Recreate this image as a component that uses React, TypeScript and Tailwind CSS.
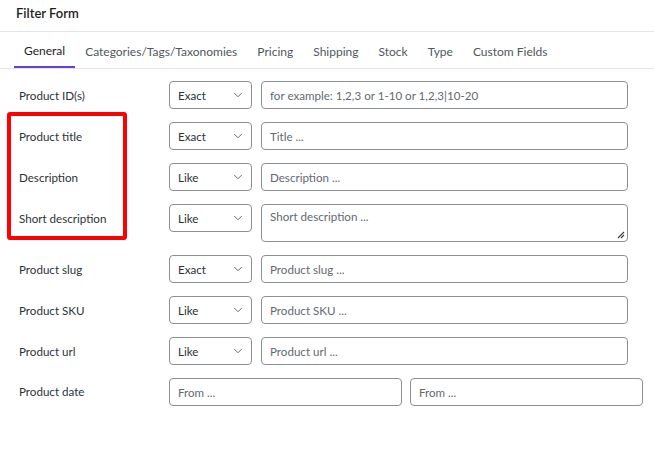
import { ChevronDown } from "lucide-react";

const tabs = ["General", "Categories/Tags/Taxonomies", "Pricing", "Shipping", "Stock", "Type", "Custom Fields"];

type Row = { label: string; mode: string; placeholder: string; area?: boolean };

const rows: Row[] = [
  { label: "Product ID(s)", mode: "Exact", placeholder: "for example: 1,2,3 or 1-10 or 1,2,3|10-20" },
  { label: "Product title", mode: "Exact", placeholder: "Title ..." },
  { label: "Description", mode: "Like", placeholder: "Description ..." },
  { label: "Short description", mode: "Like", placeholder: "Short description ...", area: true },
  { label: "Product slug", mode: "Exact", placeholder: "Product slug ..." },
  { label: "Product SKU", mode: "Like", placeholder: "Product SKU ..." },
  { label: "Product url", mode: "Like", placeholder: "Product url ..." },
];

function Select({ value }: { value: string }) {
  return (
    <div className="w-[83px] h-[28px] shrink-0 border border-[#8c8f94] rounded-[4px] flex items-center justify-between pl-[8px] pr-[6px] text-[#2c3338]">
      <span className="pt-[2px]">{value}</span>
      <ChevronDown size={14} strokeWidth={1.5} className="text-[#50575e]" />
    </div>
  );
}

export default function App() {
  return (
    <div
      className="relative w-[654px] h-[465px] bg-white text-[11.6px] text-[#2c3338] overflow-hidden"
      style={{ fontFamily: 'Lato, "Noto Sans", sans-serif' }}
    >
      {/* Header */}
      <div className="h-[32px] border-b border-[#e2e4e7] px-[16px] flex items-center">
        <h2 className="text-[13px] font-semibold text-[#1e1e1e] -mt-[3px]">Filter Form</h2>
      </div>

      {/* Tabs */}
      <div className="mt-[2px] px-[14px] border-b border-[#e2e4e7] flex h-[35px] text-[12px]">
        {tabs.map((t, i) => (
          <div
            key={t}
            className={`flex items-center px-[10px] pt-[2px] ${
              i === 0 ? "border-b-2 border-[#6341d6] text-[#1e1e1e]" : "text-[#50575e]"
            }`}
          >
            {t}
          </div>
        ))}
      </div>

      {/* Rows */}
      <div className="pt-[12px] px-[19px] flex flex-col">
        {rows.map((r) => (
          <div key={r.label} className={`flex items-start ${r.area ? "h-[51px]" : "h-[41px]"}`}>
            <div className="w-[150px] shrink-0 h-[28px] pt-[2px] flex items-center">{r.label}</div>
            <Select value={r.mode} />
            {r.area ? (
              <div className="relative ml-[9px] w-[367px] h-[38px] border border-[#8c8f94] rounded-[4px] px-[8px] pt-[3px] text-[#646970]">
                {r.placeholder}
                <svg className="absolute right-[2px] bottom-[2px]" width="10" height="10" viewBox="0 0 10 10">
                  <path d="M9 3 L3 9 M9 6 L6 9" stroke="#3c434a" strokeWidth="1.2" fill="none" />
                </svg>
              </div>
            ) : (
              <div className="ml-[9px] w-[367px] h-[28px] border border-[#8c8f94] rounded-[4px] px-[8px] pt-[2px] flex items-center text-[#646970]">
                {r.placeholder}
              </div>
            )}
          </div>
        ))}
        <div className="flex items-start h-[41px]">
          <div className="w-[150px] shrink-0 h-[28px] flex items-center">Product date</div>
          <div className="w-[233px] shrink-0 h-[28px] border border-[#8c8f94] rounded-[4px] px-[8px] pt-[1px] flex items-center text-[#646970]">
            From ...
          </div>
          <div className="ml-[8px] w-[233px] shrink-0 h-[28px] border border-[#8c8f94] rounded-[4px] px-[8px] pt-[1px] flex items-center text-[#646970]">
            From ...
          </div>
        </div>
      </div>

      {/* Annotation */}
      <div className="absolute left-[7px] top-[112px] w-[120px] h-[128px] border-[4px] border-[#ff0000] rounded-[3px] pointer-events-none" />
    </div>
  );
}
